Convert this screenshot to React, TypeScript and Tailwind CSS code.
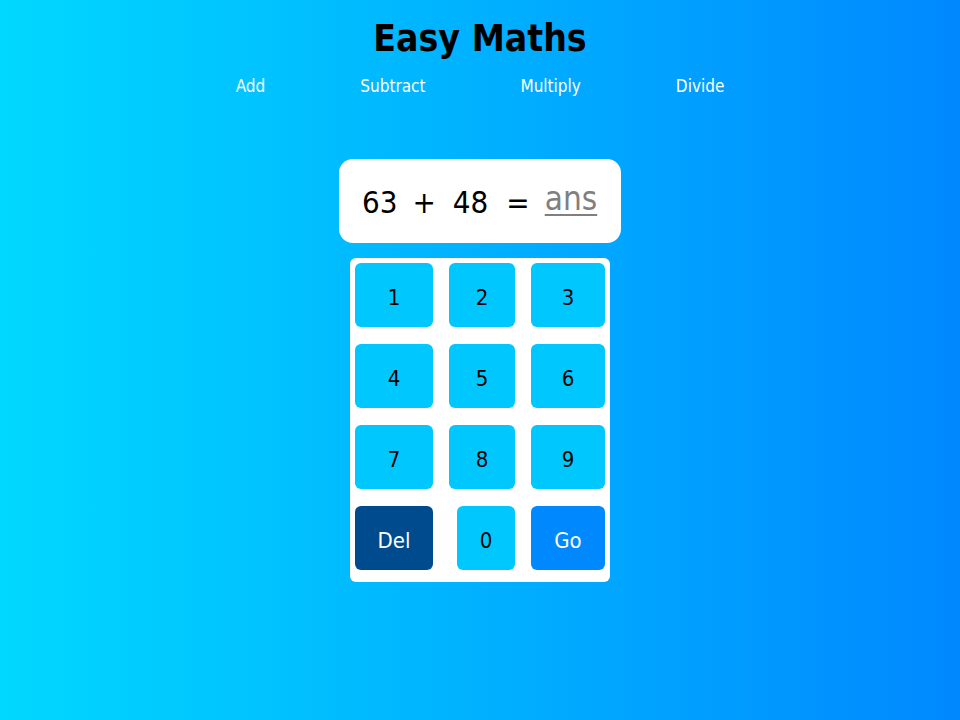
import React from "react";

const keys = [
  { label: "1", cls: "bg-[#00c8ff] text-black" },
  { label: "2", cls: "bg-[#00c8ff] text-black" },
  { label: "3", cls: "bg-[#00c8ff] text-black" },
  { label: "4", cls: "bg-[#00c8ff] text-black" },
  { label: "5", cls: "bg-[#00c8ff] text-black" },
  { label: "6", cls: "bg-[#00c8ff] text-black" },
  { label: "7", cls: "bg-[#00c8ff] text-black" },
  { label: "8", cls: "bg-[#00c8ff] text-black" },
  { label: "9", cls: "bg-[#00c8ff] text-black" },
  { label: "Del", cls: "bg-[#004b8d] text-white" },
  { label: "0", cls: "bg-[#00c8ff] text-black w-[58px] justify-self-end" },
  { label: "Go", cls: "bg-[#0088ff] text-white" },
];

export default function App() {
  return (
    <div
      className="min-h-[720px] w-full bg-gradient-to-r from-[#00d8ff] to-[#0088ff]"
      style={{ fontFamily: "'DejaVu Sans Condensed', 'DejaVu Sans', sans-serif" }}
    >
      <h1 className="pt-[17px] text-center text-[37px] font-bold leading-[44px] text-black">
        Easy Maths
      </h1>

      <nav className="mt-[15px] flex justify-center gap-[95px] text-[17px] leading-[20px] text-white">
        <a>Add</a>
        <a>Subtract</a>
        <a>Multiply</a>
        <a>Divide</a>
      </nav>

      <div className="mt-[63px] flex flex-col items-center">
        {/* Equation */}
        <div className="flex h-[84px] w-[282px] items-center rounded-[14px] bg-white pl-[23px] pt-[2px] text-[31px] text-black">
          <span>63</span>
          <span className="ml-[15px]">+</span>
          <span className="ml-[17px]">48</span>
          <span className="ml-[18px]">=</span>
          <span className="ml-[15px] -mt-[7px] text-[33px] text-[#808080] underline decoration-[2px] underline-offset-[4px]">
            ans
          </span>
        </div>

        {/* Keypad */}
        <div className="mt-[15px] grid w-[260px] grid-cols-[78px_66px_74px] gap-x-[16px] gap-y-[17px] rounded-[6px] bg-white px-[5px] pb-[12px] pt-[5px]">
          {keys.map((k) => (
            <button
              key={k.label}
              type="button"
              className={`flex h-[64px] items-center justify-center rounded-[6px] pt-[5px] text-[22px] ${k.cls}`}
            >
              {k.label}
            </button>
          ))}
        </div>
      </div>
    </div>
  );
}
